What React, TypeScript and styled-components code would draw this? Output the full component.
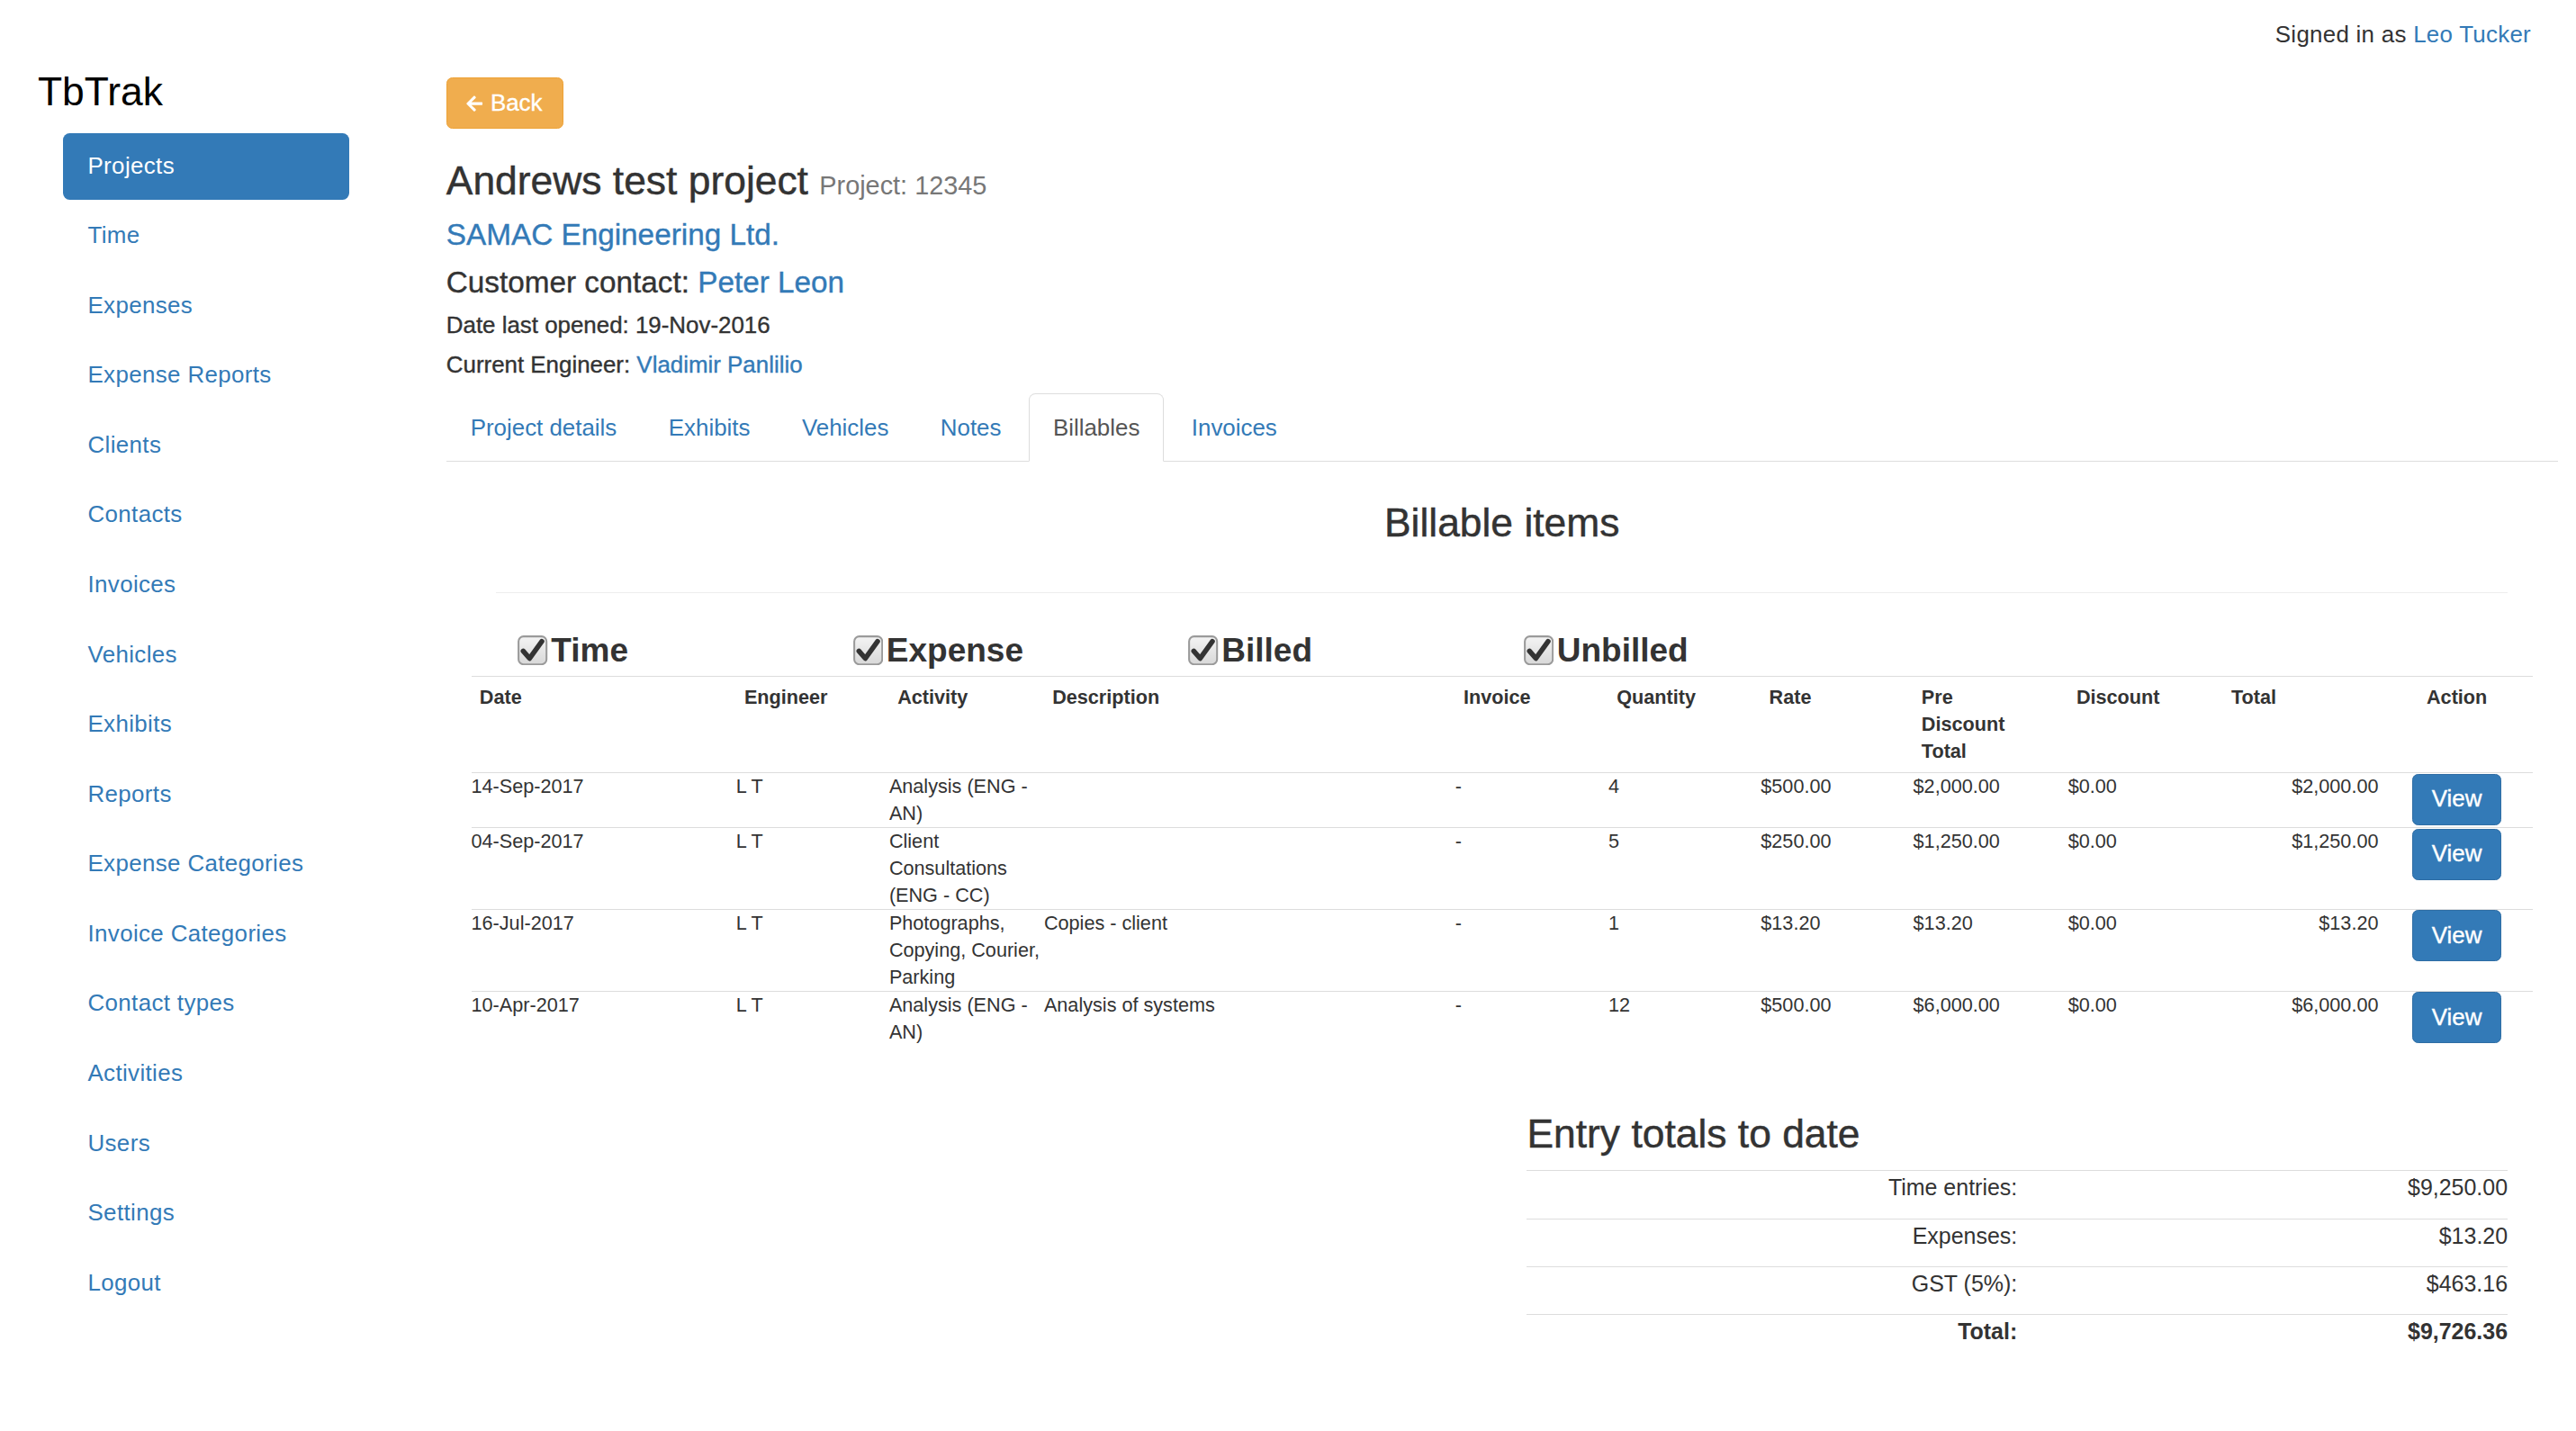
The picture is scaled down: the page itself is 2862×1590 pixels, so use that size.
import React from "react";
import styled, { createGlobalStyle } from "styled-components";
import { FaArrowLeft } from "react-icons/fa";

const GlobalStyle = createGlobalStyle`
  html, body { margin: 0; padding: 0; background: #fff; }
  body {
    font-family: "Liberation Sans", Arial, Helvetica, sans-serif;
    color: #333;
    font-size: 14px;
    line-height: 20px;
  }
  * { box-sizing: border-box; }
`;

const Page = styled.div`
  zoom: 1.85;
  width: 1547px;
  min-height: 859px;
`;

const TopBar = styled.header`
  display: flex;
  justify-content: flex-end;
  height: 31px;
  padding: 11px 27px 0 0;
  font-size: 14px;
  line-height: 20px;
  letter-spacing: 0.15px;
  color: #333;
`;

const Link = styled.a`
  color: #337ab7;
  text-decoration: none;
  cursor: pointer;
`;

const Layout = styled.div`
  display: grid;
  grid-template-columns: 268px 1268px;
`;

const Sidebar = styled.aside`
  padding-left: 22.7px;
`;

const Brand = styled.h1`
  margin: 11.3px 0 0;
  font-size: 24px;
  line-height: 26.4px;
  font-weight: 400;
  color: #000;
`;

const NavList = styled.ul`
  list-style: none;
  margin: 11.3px 0 0 15px;
  padding: 0;
  width: 172px;
  display: flex;
  flex-direction: column;
  gap: 1.95px;
`;

const NavLink = styled.a<{ $active?: boolean }>`
  display: block;
  padding: ${(p) => (p.$active ? "10px 15px" : "9.5px 15px 10.5px")};
  font-size: 14px;
  line-height: 20px;
  letter-spacing: 0.2px;
  border-radius: 4px;
  text-decoration: none;
  color: ${(p) => (p.$active ? "#fff" : "#337ab7")};
  background: ${(p) => (p.$active ? "#337ab7" : "transparent")};
`;

const Main = styled.main`
  min-width: 0;
`;

const Btn = styled.button<{ $variant: "warning" | "primary" }>`
  display: inline-flex;
  align-items: center;
  justify-content: center;
  gap: 4px;
  height: 30.8px;
  padding: 0 11px;
  font-family: inherit;
  font-size: 14px;
  line-height: 1;
  color: #fff;
  border-radius: 3.5px;
  cursor: pointer;
  -webkit-text-stroke: 0.2px #fff;
  background: ${(p) => (p.$variant === "warning" ? "#f0ad4e" : "#337ab7")};
  border: 1px solid ${(p) => (p.$variant === "warning" ? "#eea236" : "#2e6da4")};
`;

const BackBtn = styled(Btn)`
  display: flex;
  margin-top: 15.5px;
  padding: 0 12px 0 11px;
  svg { margin-top: 1px; }
`;

const Title = styled.h2`
  margin: 18.5px 0 0;
  font-size: 24px;
  line-height: 26.4px;
  font-weight: 500;
  color: #333;
  -webkit-text-stroke: 0.25px #333;
`;

const Small = styled.small`
  font-size: 15.6px;
  font-weight: 400;
  color: #777;
  -webkit-text-stroke: 0;
`;

const H4 = styled.h4<{ $gap?: number }>`
  margin: ${(p) => p.$gap ?? 8.3}px 0 0;
  font-size: 18px;
  line-height: 19.8px;
  font-weight: 500;
  color: #333;
  -webkit-text-stroke: 0.2px currentColor;
  a { -webkit-text-stroke: 0.2px #337ab7; }
`;

const H5 = styled.h5<{ $gap?: number }>`
  margin: ${(p) => p.$gap ?? 8.5}px 0 0;
  font-size: 14px;
  line-height: 15.4px;
  font-weight: 500;
  color: #333;
  -webkit-text-stroke: 0.2px currentColor;
  a { -webkit-text-stroke: 0.2px #337ab7; }
`;

const Tabs = styled.ul`
  display: flex;
  list-style: none;
  margin: 9.5px 0 0;
  padding: 0;
  border-bottom: 1px solid #ddd;
`;

const TabItem = styled.li`
  margin: 0 2px -1px 0;
`;

const TabLink = styled.a<{ $active?: boolean }>`
  display: block;
  padding: 10px 14px;
  font-size: 14px;
  line-height: 20px;
  text-decoration: none;
  border: 1px solid ${(p) => (p.$active ? "#ddd" : "transparent")};
  border-bottom-color: ${(p) => (p.$active ? "#fff" : "transparent")};
  border-radius: 4px 4px 0 0;
  background: ${(p) => (p.$active ? "#fff" : "transparent")};
  color: ${(p) => (p.$active ? "#555" : "#337ab7")};
`;

const TabPane = styled.div`
  padding: 0 15px;
`;

const Section = styled.div`
  padding: 0 15px;
`;

const CenterHeading = styled.h3`
  margin: 24px 0 0;
  text-align: center;
  font-size: 24px;
  line-height: 26.4px;
  font-weight: 500;
  color: #333;
  -webkit-text-stroke: 0.25px #333;
`;

const Rule = styled.hr`
  margin: 28.4px 0 0;
  border: 0;
  border-top: 1px solid #eee;
  height: 0;
`;

const FilterRow = styled.div`
  display: grid;
  grid-template-columns: repeat(6, 1fr);
  margin: 23.5px 0 4px;
`;

const FilterLabel = styled.label`
  display: flex;
  align-items: flex-end;
  gap: 2px;
  padding-left: 13px;
  font-size: 20px;
  line-height: 22px;
  font-weight: 700;
  color: #333;
  svg { margin-bottom: 2.5px; flex: none; }
`;

const Table = styled.table`
  width: 100%;
  table-layout: fixed;
  border-collapse: collapse;
  font-size: 11.7px;
  line-height: 16.2px;
  color: #333;
`;

const Th = styled.th<{ $align?: "left" | "center" | "right" }>`
  padding: 4.6px 5px 4.2px;
  vertical-align: top;
  text-align: ${(p) => p.$align || "left"};
  font-weight: 700;
  border-top: 1px solid #ddd;
  border-bottom: 1px solid #ddd;
`;

const ThText = styled.span<{ $narrow?: boolean }>`
  display: block;
  max-width: ${(p) => (p.$narrow ? "56px" : "none")};
`;

const Td = styled.td<{ $align?: "left" | "center" | "right" }>`
  padding: 0 ${(p) => (p.$align === "right" ? "1.6px" : "0")} 0 0;
  vertical-align: top;
  text-align: ${(p) => p.$align || "left"};
  border-top: 1px solid #ddd;
`;

const ViewBtn = styled(Btn)`
  width: 53.4px;
  margin-top: 0.3px;
`;

const TotalsBox = styled.div`
  margin: 40px 0 0 calc(50% + 15px);
`;

const TotalsHeading = styled.h3`
  margin: 0;
  font-size: 24px;
  line-height: 26.4px;
  font-weight: 500;
  color: #333;
  -webkit-text-stroke: 0.25px #333;
`;

const TotalsTable = styled.table`
  width: 100%;
  margin-top: 8.5px;
  border-collapse: collapse;
  table-layout: fixed;
  font-size: 13.5px;
  line-height: 20px;
  color: #333;
`;

const TotalsCell = styled.td<{ $strong?: boolean }>`
  padding: 0 0 8.3px;
  text-align: right;
  border-top: 1px solid #ddd;
  font-weight: ${(p) => (p.$strong ? 700 : 400)};
`;

const CheckIcon = () => (
  <svg width="18" height="18" viewBox="0 0 18 18" aria-hidden="true">
    <defs>
      <linearGradient id="cbg" x1="0" y1="0" x2="0" y2="1">
        <stop offset="0" stopColor="#f4f4f4" />
        <stop offset="1" stopColor="#d8d8d8" />
      </linearGradient>
    </defs>
    <rect x="0.6" y="0.6" width="16.8" height="16.8" rx="3" fill="url(#cbg)" stroke="#9a9a9a" strokeWidth="1.1" />
    <path d="M3.4 9.4 L7.2 13.8 L14.6 3.6" fill="none" stroke="#333" strokeWidth="3" strokeLinecap="round" strokeLinejoin="round" />
  </svg>
);

const navItems = [
  "Projects",
  "Time",
  "Expenses",
  "Expense Reports",
  "Clients",
  "Contacts",
  "Invoices",
  "Vehicles",
  "Exhibits",
  "Reports",
  "Expense Categories",
  "Invoice Categories",
  "Contact types",
  "Activities",
  "Users",
  "Settings",
  "Logout",
];

const tabs = ["Project details", "Exhibits", "Vehicles", "Notes", "Billables", "Invoices"];

const filters = ["Time", "Expense", "Billed", "Unbilled"];

const colWidths = [159, 92, 93, 247, 92, 91.5, 91.5, 93, 93, 95, 91];

type Row = {
  date: string;
  engineer: string;
  activity: string;
  description: string;
  invoice: string;
  qty: string;
  rate: string;
  pre: string;
  discount: string;
  total: string;
};

const rows: Row[] = [
  { date: "14-Sep-2017", engineer: "L T", activity: "Analysis (ENG - AN)", description: "", invoice: "-", qty: "4", rate: "$500.00", pre: "$2,000.00", discount: "$0.00", total: "$2,000.00" },
  { date: "04-Sep-2017", engineer: "L T", activity: "Client Consultations (ENG - CC)", description: "", invoice: "-", qty: "5", rate: "$250.00", pre: "$1,250.00", discount: "$0.00", total: "$1,250.00" },
  { date: "16-Jul-2017", engineer: "L T", activity: "Photographs, Copying, Courier, Parking", description: "Copies - client", invoice: "-", qty: "1", rate: "$13.20", pre: "$13.20", discount: "$0.00", total: "$13.20" },
  { date: "10-Apr-2017", engineer: "L T", activity: "Analysis (ENG - AN)", description: "Analysis of systems", invoice: "-", qty: "12", rate: "$500.00", pre: "$6,000.00", discount: "$0.00", total: "$6,000.00" },
];

const totals = [
  { label: "Time entries:", value: "$9,250.00" },
  { label: "Expenses:", value: "$13.20" },
  { label: "GST (5%):", value: "$463.16" },
  { label: "Total:", value: "$9,726.36", strong: true },
];

export default function App() {
  return (
    <Page>
      <GlobalStyle />
      <TopBar>
        <span>
          Signed in as <Link>Leo Tucker</Link>
        </span>
      </TopBar>
      <Layout>
        <Sidebar>
          <Brand>TbTrak</Brand>
          <NavList>
            {navItems.map((item, i) => (
              <li key={item}>
                <NavLink $active={i === 0}>{item}</NavLink>
              </li>
            ))}
          </NavList>
        </Sidebar>
        <Main>
          <BackBtn $variant="warning">
            <FaArrowLeft size={11} />
            Back
          </BackBtn>
          <Title>
            Andrews test project <Small>Project: 12345</Small>
          </Title>
          <H4 $gap={6.6}>
            <Link>SAMAC Engineering Ltd.</Link>
          </H4>
          <H4 $gap={8.8}>
            Customer contact: <Link>Peter Leon</Link>
          </H4>
          <H5 $gap={7.8}>Date last opened: 19-Nov-2016</H5>
          <H5>
            Current Engineer: <Link>Vladimir Panlilio</Link>
          </H5>
          <Tabs>
            {tabs.map((t) => (
              <TabItem key={t}>
                <TabLink $active={t === "Billables"}>{t}</TabLink>
              </TabItem>
            ))}
          </Tabs>
          <TabPane>
            <Section>
              <CenterHeading>Billable items</CenterHeading>
              <Rule />
              <FilterRow>
                {filters.map((f) => (
                  <FilterLabel key={f}>
                    <CheckIcon />
                    {f}
                  </FilterLabel>
                ))}
              </FilterRow>
            </Section>
            <Table>
              <colgroup>
                {colWidths.map((w, i) => (
                  <col key={i} style={{ width: w }} />
                ))}
              </colgroup>
              <thead>
                <tr>
                  <Th>Date</Th>
                  <Th>Engineer</Th>
                  <Th>Activity</Th>
                  <Th>Description</Th>
                  <Th>Invoice</Th>
                  <Th>Quantity</Th>
                  <Th>Rate</Th>
                  <Th>
                    <ThText $narrow>Pre Discount Total</ThText>
                  </Th>
                  <Th>Discount</Th>
                  <Th>Total</Th>
                  <Th $align="center">Action</Th>
                </tr>
              </thead>
              <tbody>
                {rows.map((r, i) => (
                  <tr key={i}>
                    <Td>{r.date}</Td>
                    <Td>{r.engineer}</Td>
                    <Td>{r.activity}</Td>
                    <Td>{r.description}</Td>
                    <Td>{r.invoice}</Td>
                    <Td>{r.qty}</Td>
                    <Td>{r.rate}</Td>
                    <Td>{r.pre}</Td>
                    <Td>{r.discount}</Td>
                    <Td $align="right">{r.total}</Td>
                    <Td $align="center">
                      <ViewBtn $variant="primary">View</ViewBtn>
                    </Td>
                  </tr>
                ))}
              </tbody>
            </Table>
            <Section>
              <TotalsBox>
                <TotalsHeading>Entry totals to date</TotalsHeading>
                <TotalsTable>
                  <tbody>
                    {totals.map((t) => (
                      <tr key={t.label}>
                        <TotalsCell $strong={t.strong}>{t.label}</TotalsCell>
                        <TotalsCell $strong={t.strong}>{t.value}</TotalsCell>
                      </tr>
                    ))}
                  </tbody>
                </TotalsTable>
              </TotalsBox>
            </Section>
          </TabPane>
        </Main>
      </Layout>
    </Page>
  );
}
